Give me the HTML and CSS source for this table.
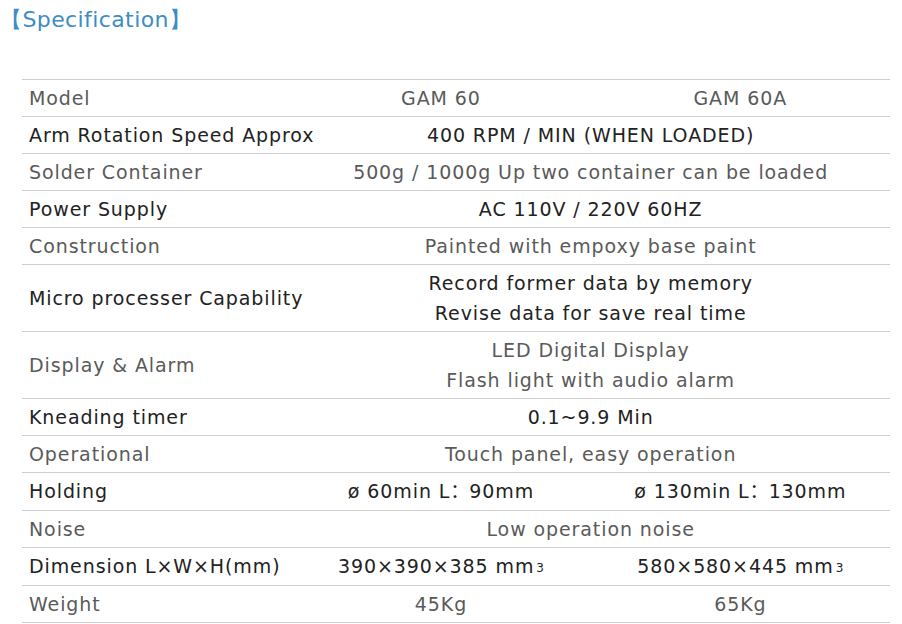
FILE: index.html
```html
<!DOCTYPE html>
<html>
<head>
<meta charset="utf-8">
<link rel="stylesheet" href="styles.css">
</head>
<body>
<h2 class="title">【Specification】</h2>
<table class="spec">
  <colgroup><col class="c-lbl"><col class="c-val"><col class="c-val"></colgroup>
  <tr class="lt"><td class="lbl">Model</td><td>GAM 60</td><td>GAM 60A</td></tr>
  <tr class="dk"><td class="lbl">Arm Rotation Speed Approx</td><td colspan="2">400 RPM / MIN (WHEN LOADED)</td></tr>
  <tr class="lt"><td class="lbl">Solder Container</td><td colspan="2">500g / 1000g Up two container can be loaded</td></tr>
  <tr class="dk"><td class="lbl">Power Supply</td><td colspan="2">AC 110V / 220V 60HZ</td></tr>
  <tr class="lt"><td class="lbl">Construction</td><td colspan="2">Painted with empoxy base paint</td></tr>
  <tr class="dk"><td class="lbl">Micro processer Capability</td><td colspan="2">Record former data by memory<br>Revise data for save real time</td></tr>
  <tr class="lt"><td class="lbl">Display &amp; Alarm</td><td colspan="2">LED Digital Display<br>Flash light with audio alarm</td></tr>
  <tr class="dk"><td class="lbl">Kneading timer</td><td colspan="2">0.1~9.9 Min</td></tr>
  <tr class="lt"><td class="lbl">Operational</td><td colspan="2">Touch panel, easy operation</td></tr>
  <tr class="dk tall"><td class="lbl">Holding</td><td>ø 60min L<span class="cjk">：</span>90mm</td><td>ø 130min L<span class="cjk">：</span>130mm</td></tr>
  <tr class="lt"><td class="lbl">Noise</td><td colspan="2">Low operation noise</td></tr>
  <tr class="dk tall"><td class="lbl">Dimension L×W×H(mm)</td><td>390×390×385 mm<sup>3</sup></td><td>580×580×445 mm<sup>3</sup></td></tr>
  <tr class="lt"><td class="lbl">Weight</td><td>45Kg</td><td>65Kg</td></tr>
</table>
</body>
</html>
```
FILE: styles.css
```css
html, body {
  margin: 0;
  padding: 0;
  background: #fff;
}
body {
  font-family: "DejaVu Sans", Verdana, sans-serif;
}
.title {
  margin: 0;
  padding: 5px 0 0 0;
  font-size: 22px;
  font-weight: normal;
  line-height: 30px;
  color: #3d8ec3;
  letter-spacing: 0.4px;
}
.spec {
  margin: 44px 0 0 22px;
  width: 868px;
  table-layout: fixed;
  border-collapse: collapse;
  border-top: 1px solid #cfcfcf;
}
.c-lbl { width: 269px; }
.c-val { width: 299px; }
.spec td {
  border-bottom: 1px solid #cfcfcf;
  padding: 3px 0;
  height: 30px;
  line-height: 30px;
  font-size: 19px;
  letter-spacing: 0.9px;
  text-align: center;
  white-space: nowrap;
}
.spec tr.tall td {
  height: 31px;
  line-height: 31px;
}
.spec td.lbl {
  text-align: left;
  padding-left: 7px;
}
.spec tr.dk td { color: #222; }
.spec tr.lt td { color: #5a5a5a; }
.cjk {
  font-family: "Noto Sans CJK SC", sans-serif;
  letter-spacing: 0;
  line-height: 0;
}
.spec sup {
  font-size: 12px;
  line-height: 0;
  vertical-align: 0;
  position: relative;
  top: -1px;
  letter-spacing: 0;
  margin-left: 2px;
}
```
